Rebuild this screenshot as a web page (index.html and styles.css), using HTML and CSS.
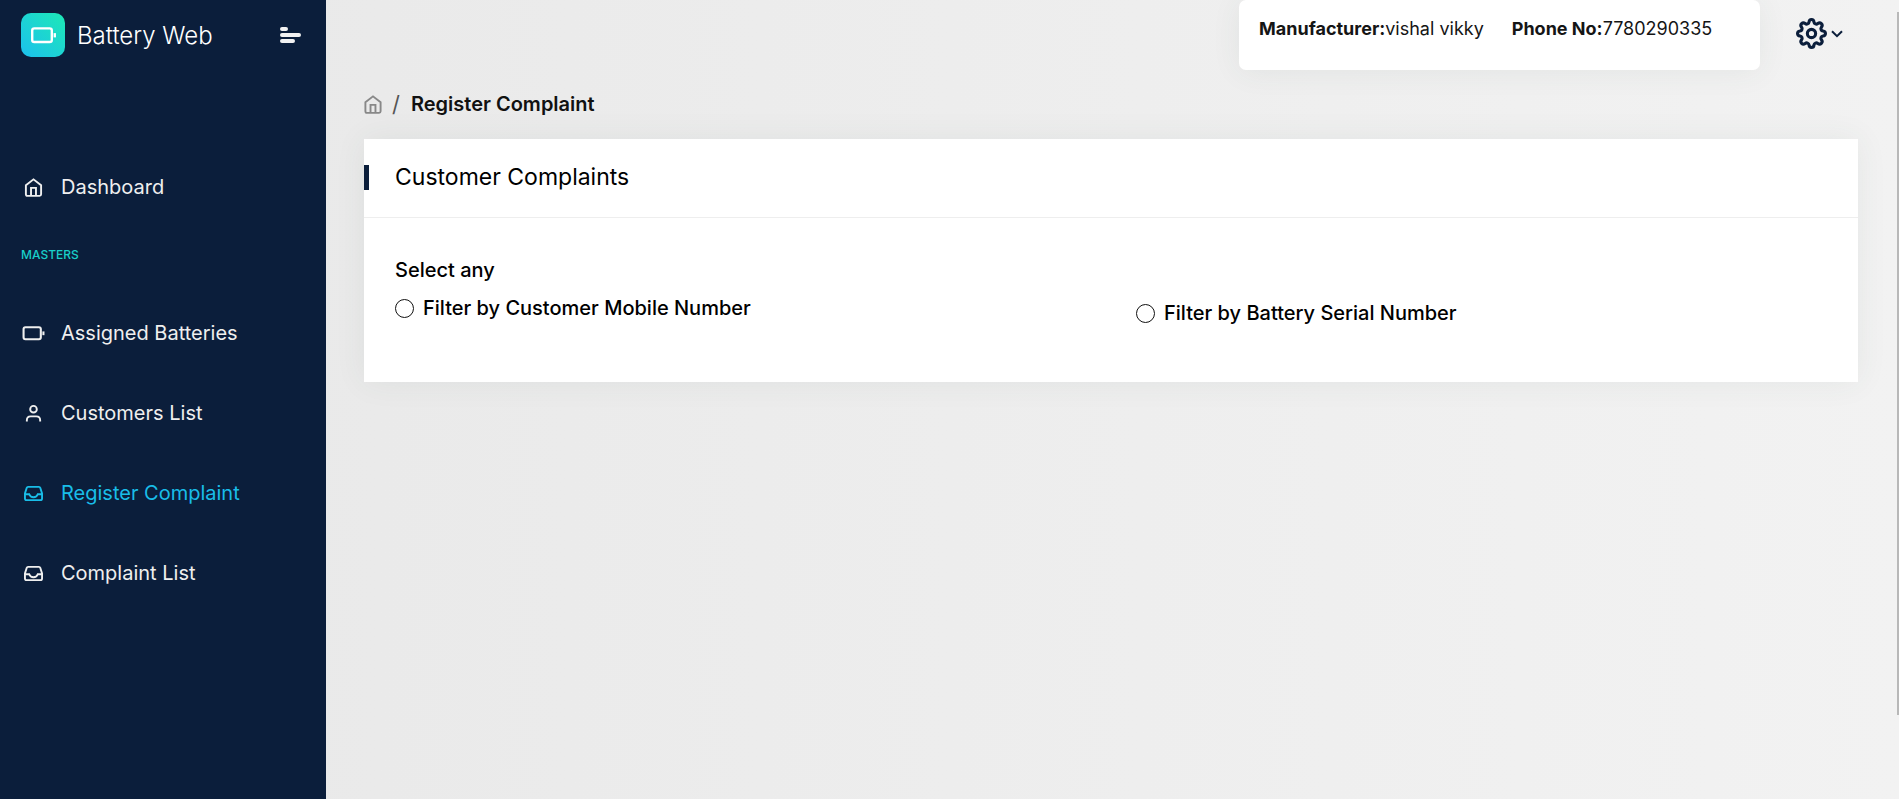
FILE: index.html
```html
<!DOCTYPE html>
<html lang="en">
<head>
<meta charset="utf-8">
<title>Battery Web</title>
<link rel="stylesheet" href="styles.css">
</head>
<body>
<svg class="sprite" aria-hidden="true">
  <symbol id="home" viewBox="0 0 18 20"><path d="M1 7.6 9 1.4l8 6.2v9.6c0 1-.6 1.6-1.6 1.6H2.600c-1 0-1.600-.6-1.600-1.600z M6.400 18.500V10.400h5.200v8.100"/></symbol>
  <symbol id="battery" viewBox="0 0 22 16"><rect x="1.500" y="2" width="16.500" height="11.500" rx="1.800"/><path d="M20.500 6v3.600"/></symbol>
  <symbol id="user" viewBox="0 0 18 20"><circle cx="9" cy="5.500" r="3.500"/><path d="M2 18.500v-1.500c0-2.400 1.500-4 4-4h6c2.500 0 4 1.600 4 4v1.500"/></symbol>
  <symbol id="inbox" viewBox="0 -1 20 20"><path d="M4.300 2h11.400c.7 0 1.200.4 1.400 1L19 9v5.300c0 1.100-.6 1.700-1.700 1.700H2.700C1.600 16 1 15.400 1 14.300V9l1.900-6c.2-.6.7-1 1.400-1z M1 9.800h4.500c.8 2.300 2.300 3.200 4.500 3.200s3.700-.9 4.500-3.200H19"/></symbol>
</svg>
<div class="app">
  <aside class="sidebar">
    <div class="brand">
      <span class="logo"><svg class="logo-icon"><use href="#battery"/></svg></span>
      <span class="brand-name">Battery Web</span>
      <button class="toggle" type="button" aria-label="Toggle menu">
        <svg class="toggle-icon" viewBox="0 0 21 16"><path d="M2 2h4M2 8h17M2 14h11"/></svg>
      </button>
    </div>
    <nav class="nav">
      <a class="nav-link" href="#"><svg class="nav-icon"><use href="#home"/></svg>Dashboard</a>
      <p class="nav-label">MASTERS</p>
      <a class="nav-link" href="#"><svg class="nav-icon"><use href="#battery"/></svg>Assigned Batteries</a>
      <a class="nav-link" href="#"><svg class="nav-icon"><use href="#user"/></svg>Customers List</a>
      <a class="nav-link active" href="#"><svg class="nav-icon"><use href="#inbox"/></svg>Register Complaint</a>
      <a class="nav-link" href="#"><svg class="nav-icon"><use href="#inbox"/></svg>Complaint List</a>
    </nav>
  </aside>
  <div class="content">
    <header class="topbar">
      <div class="profile">
        <span><b>Manufacturer:</b>vishal vikky</span>
        <span><b>Phone No:</b>7780290335</span>
      </div>
      <button class="settings" type="button" aria-label="Settings">
        <svg class="gear" viewBox="0 0 30 30"><circle cx="15" cy="15" r="4"/><path d="M12.600 3.900C12.900 0.700 17.100 0.700 17.400 3.900C17.600 5.700 19.700 6.500 21.100 5.400C23.600 3.400 26.600 6.400 24.600 8.900C23.500 10.300 24.300 12.400 26.100 12.600C29.300 12.900 29.300 17.100 26.100 17.400C24.300 17.600 23.500 19.700 24.600 21.100C26.600 23.600 23.600 26.600 21.100 24.600C19.700 23.500 17.600 24.300 17.400 26.100C17.100 29.300 12.900 29.300 12.600 26.100C12.400 24.300 10.300 23.500 8.900 24.600C6.400 26.600 3.400 23.600 5.400 21.100C6.500 19.700 5.700 17.600 3.900 17.400C0.700 17.100 0.700 12.900 3.900 12.600C5.700 12.400 6.500 10.300 5.400 8.900C3.400 6.400 6.400 3.400 8.900 5.400C10.300 6.500 12.400 5.700 12.600 3.900Z"/></svg>
        <svg class="chevron" viewBox="0 0 12 8"><path d="M1 1.200l5 5 5-5"/></svg>
      </button>
    </header>
    <main class="main">
      <nav class="breadcrumb" aria-label="Breadcrumb">
        <a class="crumb-home" href="#" aria-label="Home"><svg class="crumb-icon"><use href="#home"/></svg></a>
        <span class="slash">/</span>
        <span class="crumb">Register Complaint</span>
      </nav>
      <section class="card">
        <div class="card-header"><h1 class="card-title">Customer Complaints</h1></div>
        <fieldset class="card-body">
          <legend class="legend">Select any</legend>
          <div class="options">
            <label class="option"><input class="radio" type="radio" name="filter">Filter by Customer Mobile Number</label>
            <label class="option spaced"><input class="radio" type="radio" name="filter">Filter by Battery Serial Number</label>
          </div>
        </fieldset>
      </section>
    </main>
  </div>
</div>
<div class="scroll-thumb"></div>
</body>
</html>
```

FILE: styles.css
```css
* { box-sizing: border-box; }
body { margin: 0; font-family: Inter, "Noto Sans", sans-serif; font-size: 20px; color: #000; }
button { padding: 0; border: 0; background: none; cursor: pointer; }
a { color: inherit; text-decoration: none; }
svg { display: block; fill: none; stroke: currentColor; stroke-width: 2; }
.sprite { position: absolute; width: 0; height: 0; }
.app { display: flex; min-height: 100vh; background: linear-gradient(90deg, #e8e8e8, #f2f2f2); }

.sidebar { flex: none; width: 326px; background: #0b1e3b; color: #efefef; }
.brand { display: flex; align-items: center; height: 70px; padding: 0 25px 0 21px; }
.logo { display: grid; place-items: center; width: 44px; height: 44px; border-radius: 10px; background: linear-gradient(45deg, #1cc0ee, #1de9b6); color: #fff; }
.logo-icon { width: 27px; height: 19px; }
.brand-name { flex: 1; margin-left: 12px; font-size: 24px; font-weight: 300; color: #fff; }
.toggle { color: #f2f2f2; }
.toggle-icon { width: 21px; height: 16px; stroke-width: 4; stroke-linecap: round; }
.nav { padding-top: 77px; }
.nav-link { display: flex; align-items: center; gap: 16px; height: 80px; padding-left: 22px; }
.nav-icon { width: 23px; height: 19px; }
.nav-label { margin: 17px 0 27px; padding-left: 21px; font-size: 12px; line-height: 22px; font-weight: 500; color: #19cfc8; }
.active { color: #19bde8; }

.content { flex: 1; min-width: 0; }
.topbar { display: flex; justify-content: flex-end; gap: 36px; padding-right: 56px; }
.profile { display: flex; gap: 28px; width: 521px; height: 70px; padding: 16px 20px; border-radius: 7px; background: #fff; box-shadow: 0 2px 30px rgba(50, 80, 70, .07); font-size: 18px; line-height: 26px; color: #151515; white-space: nowrap; }
.settings { display: flex; align-items: center; gap: 4px; color: #0b1e3b; height: 67px; }
.gear { width: 31px; height: 31px; stroke-width: 3; }
.chevron { width: 12px; height: 8px; }
.main { padding: 20px 41px 40px 38px; }
.breadcrumb { display: flex; align-items: center; height: 28px; margin-bottom: 21px; }
.crumb-home { color: #888; }
.crumb-icon { width: 18px; height: 19px; }
.slash { margin: 0 11px 0 10px; font-size: 22px; color: #555; }
.crumb { font-weight: 600; color: #111; }
.card { background: #fff; box-shadow: 0 0 30px rgba(50, 80, 70, .07); }
.card-header { padding: 26px 0 27px; border-bottom: 1px solid #eee; }
.card-title { margin: 0; padding-left: 26px; border-left: 5px solid #0b1e3b; font-size: 23px; line-height: 25px; font-weight: 400; }
.card-body { margin: 0; padding: 38px 31px 55px; border: 0; font-weight: 500; line-height: 28px; }
.legend { float: left; padding: 0; }
.options { clear: both; display: grid; grid-template-columns: 1fr 1fr; gap: 50px; padding-top: 10px; }
.option { display: flex; align-items: center; gap: 9px; height: 28px; }
.spaced { margin-top: 5px; }
.radio { appearance: none; width: 19px; height: 19px; margin: 0; border: 1px solid #111; border-radius: 50%; }
.radio:checked { background: radial-gradient(#0b1e3b 45%, #fff 50%); }
.scroll-thumb { position: fixed; top: 12px; right: 0; width: 2px; height: 88vh; background: #b8b8b8; }
```
